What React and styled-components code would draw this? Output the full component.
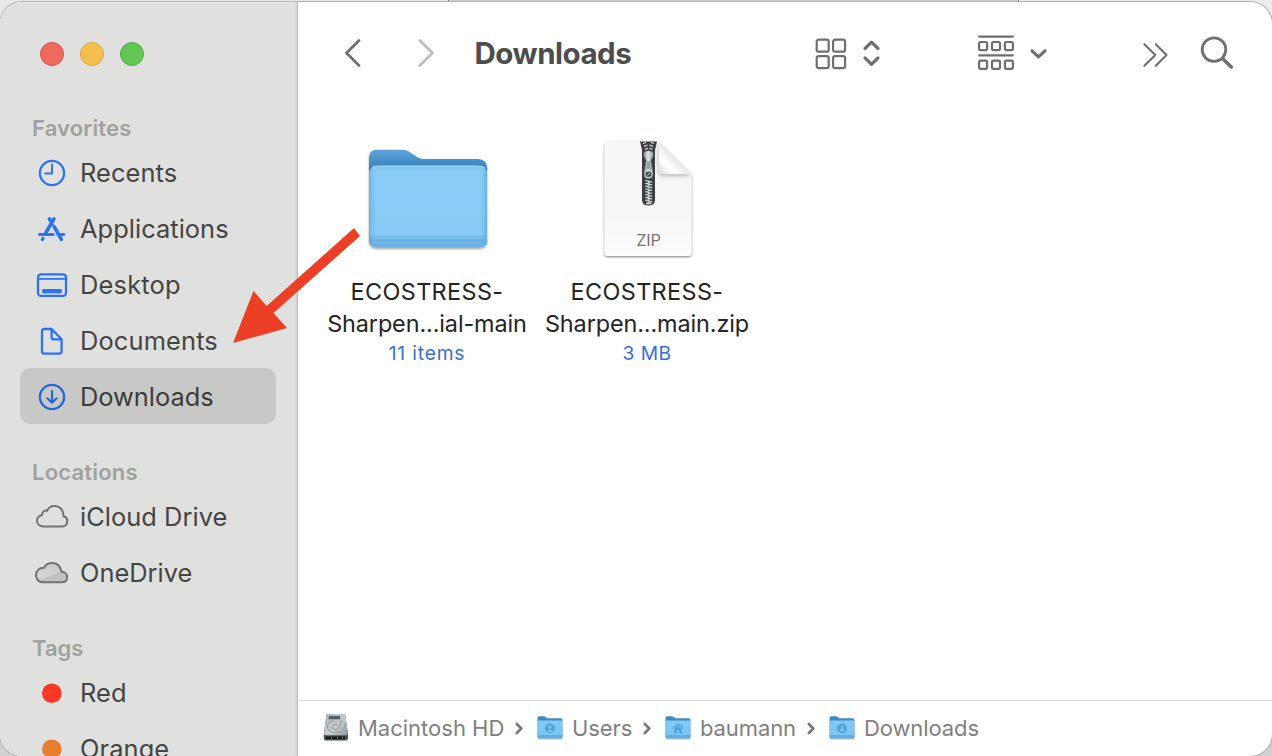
import React from "react";
import styled, { createGlobalStyle } from "styled-components";

const Global = createGlobalStyle`
  *, *::before, *::after { box-sizing: border-box; }
  body { margin: 0; font-family: Inter, "Liberation Sans", sans-serif; }
  svg { display: block; flex: none; overflow: visible; }
`;

const Desktop = styled.div`
  position: relative;
  width: 1272px;
  height: 756px;
  padding-top: 2px;
  overflow: hidden;
  background:
    linear-gradient(#a33a30, #a33a30) 0 736px / 1px 5px no-repeat,
    linear-gradient(90deg, #e8e8e8 0 448px, #777 448px 449px, #cfcfcf 449px 1018px, #777 1018px 1019px, #ececec 1019px) 0 0 / 100% 60px no-repeat,
    #d0d0d0;
`;

const Window = styled.div`
  display: flex;
  height: 754px;
  border-radius: 22px;
  overflow: hidden;
  background: #fff;
  box-shadow: 0 0 0 1px #b0b0b0;
`;

const Sidebar = styled.aside`
  flex: none;
  width: 298px;
  padding: 40px 22px 0 20px;
  background: #e0e0de;
  box-shadow: inset -1px 0 #bdbdbb, inset -3px 0 2px -1px #d0d0ce, inset 0 1px #ededec;
`;

const Lights = styled.div`
  display: flex;
  gap: 16px;
  padding-left: 20px;
`;

const Light = styled.span`
  width: 24px;
  height: 24px;
  border-radius: 50%;
  background: ${(p) => p.$fill};
  border: 1px solid ${(p) => p.$edge};
`;

const Section = styled.section`
  margin-top: ${(p) => p.$gap || 32}px;
`;

const Text = styled.span`
  white-space: nowrap;
  letter-spacing: ${(p) => p.$track || 0}px;
`;

const SectionTitle = styled(Text)`
  display: block;
  height: 32px;
  padding-left: 12px;
  font-size: 22px;
  font-weight: 600;
  line-height: 33px;
  color: #a1a19f;
`;

const Item = styled.div`
  display: flex;
  align-items: center;
  height: 56px;
  border-radius: 10px;
  background: ${(p) => (p.$active ? "#c8c8c6" : "transparent")};
  color: ${(p) => (p.$active ? "#3c3c3b" : "#454544")};
`;

const ItemIcon = styled.span`
  display: flex;
  width: 60px;
  padding-left: 14px;
`;

const ItemLabel = styled(Text)`
  font-size: 25.4px;
  line-height: 32px;
  padding-top: 2px;
`;

const Main = styled.main`
  flex: 1;
  display: flex;
  flex-direction: column;
  min-width: 0;
`;

const Toolbar = styled.header`
  display: flex;
  align-items: center;
  height: 102px;
  padding: 0 37px 0 46px;
  color: #6f6f6f;
`;

const Nav = styled.div`
  display: flex;
  gap: 56px;
`;

const Title = styled(Text)`
  width: 340px;
  margin-left: 38.5px;
  font-size: 29.5px;
  font-weight: 700;
  line-height: 36px;
  color: #4d4d4d;
`;

const Controls = styled.div`
  display: flex;
  align-items: center;
  gap: ${(p) => p.$gap}px;
  margin-right: ${(p) => p.$after || 0}px;
`;

const Files = styled.div`
  flex: 1;
  display: flex;
  padding: 28px 0 0 19px;
`;

const File = styled.figure`
  display: flex;
  flex-direction: column;
  align-items: center;
  width: 220px;
  margin: 0;
`;

const Thumb = styled.div`
  height: 144px;
  padding-left: 2px;
`;

const FileName = styled(Text)`
  font-size: 23.4px;
  line-height: 32px;
  color: #242424;
`;

const Meta = styled(Text)`
  font-size: 19.2px;
  line-height: 26px;
  color: #3570d8;
`;

const PathBar = styled.footer`
  display: flex;
  align-items: center;
  height: 56px;
  padding-left: 25px;
  padding-bottom: 1px;
  border-top: 1px solid #dadada;
  color: #808080;
`;

const Crumb = styled.span`
  display: flex;
  align-items: center;
  gap: 9px;
  width: ${(p) => p.$width}px;
`;

const CrumbText = styled(Text)`
  font-size: 22px;
  line-height: 28px;
`;

const Separator = styled.span`
  display: flex;
  width: 22px;
`;

const Arrow = styled.svg`
  position: absolute;
  left: 233px;
  top: 227px;
`;

const blue = { fill: "none", stroke: "#2d72f3", strokeWidth: 2.3, strokeLinecap: "round", strokeLinejoin: "round" };

const Clock = () => (
  <svg width="36" height="36" {...blue}>
    <circle cx="18" cy="19" r="12.1" />
    <path d="M18 10.5V19.5H11.2" strokeWidth="2" />
  </svg>
);
const Apps = () => (
  <svg width="36" height="36" {...blue} strokeWidth="3.3">
    <path d="M15.4 8.8L17.2 11.9M19.9 8.8L11.8 22.8" strokeWidth="3.6" />
    <path d="M5.5 24.4H19.2M26.5 24.4H29.8" strokeWidth="3" />
    <path d="M20.4 17L27.3 29.3" strokeWidth="3.6" />
    <path d="M19 15L21 19" strokeWidth="2" />
    <path d="M9 28.6L8.4 29.4" />
  </svg>
);
const DesktopIcon = () => (
  <svg width="36" height="36" {...blue}>
    <rect x="4" y="8.3" width="28" height="21.6" rx="3" />
    <path d="M4 12.9H32" strokeWidth="1.8" />
    <rect x="8.2" y="23" width="19.6" height="4.2" rx=".8" fill="#2d72f3" stroke="none" />
  </svg>
);
const DocIcon = () => (
  <svg width="36" height="36" {...blue}>
    <path d="M17.6 7H10.4Q8 7 8 9.5V29.3Q8 31.7 10.4 31.7H25.2Q27.6 31.7 27.6 29.3V17.3ZM17.6 7V15.5Q17.6 17.3 19.4 17.3H27.6" />
  </svg>
);
const DownIcon = () => (
  <svg width="36" height="36" {...blue} stroke="#2366df">
    <circle cx="18" cy="19" r="12.1" />
    <path d="M18 13V24.7M13.4 20.3L18 24.8L22.6 20.3" strokeWidth="2.1" />
  </svg>
);
const ICloud = () => (
  <svg width="36" height="36" fill="none" stroke="#737372" strokeWidth="2">
    <path d="M9.5 28.4H28.2A5.2 5.2 0 0 0 29.5 18.2C29.8 12 25.6 7.9 20.6 7.9C17 7.9 14.4 9.9 13 12.7C10.4 12 8 14 8 17C5 17.8 3 19.8 3 22.8C3 26 5.6 28.4 9.5 28.4Z" />
  </svg>
);
const OneDriveIcon = () => (
  <svg width="36" height="36">
    <path d="M8.4 28.3H27.6C31 28.3 33.1 26.1 33.1 23C33.1 20 30.7 17.8 27.6 17.8C26.4 12.2 22.5 9.1 18 9.1C14.5 9.1 11.8 10.7 10 13.7C5.5 13.5 2 16.6 2 21C2 25.4 5 28.3 8.4 28.3Z" fill="#d3d3d1" />
    <path d="M4 27L20 20L28 18L32 20V25L28 28H8Z" fill="#c0c0be" />
    <path d="M10 14L20 19.5L28 17.8L24 12L18 9Z" fill="#cdcdcb" />
    <path d="M8.4 28.3H27.6C31 28.3 33.1 26.1 33.1 23C33.1 20 30.7 17.8 27.6 17.8C26.4 12.2 22.5 9.1 18 9.1C14.5 9.1 11.8 10.7 10 13.7C5.5 13.5 2 16.6 2 21C2 25.4 5 28.3 8.4 28.3Z" fill="none" stroke="#737372" strokeWidth="2" />
  </svg>
);
const Dot = ({ color }) => (
  <svg width="36" height="36"><circle cx="17.8" cy="19.2" r="9.8" fill={color} /></svg>
);

const FolderSvg = styled.svg`
  margin-top: 16px;
`;

const FolderArt = () => (
  <FolderSvg width="122" height="108" viewBox="0 0 122 108">
    <defs>
      <linearGradient id="back" x1="0" y1="0" x2="0" y2="1">
        <stop offset="0" stopColor="#5fa5d8" /><stop offset=".2" stopColor="#3580c0" /><stop offset="1" stopColor="#3580c0" />
      </linearGradient>
      <linearGradient id="front" x1="0" y1="0" x2="0" y2="1">
        <stop offset="0" stopColor="#81c7f1" /><stop offset=".08" stopColor="#89cdf7" /><stop offset=".84" stopColor="#87cbf6" /><stop offset=".86" stopColor="#75bae7" /><stop offset=".88" stopColor="#7cc2ed" /><stop offset=".91" stopColor="#69afdf" /><stop offset=".94" stopColor="#6fb7e7" /><stop offset="1" stopColor="#68aedf" />
      </linearGradient>
      <linearGradient id="side" x1="0" y1="0" x2="1" y2="0">
        <stop offset="0" stopColor="#4a9bd3" stopOpacity=".5" /><stop offset=".06" stopColor="#69b5e8" stopOpacity="0" /><stop offset=".94" stopColor="#69b5e8" stopOpacity="0" /><stop offset="1" stopColor="#4a9bd3" stopOpacity=".5" />
      </linearGradient>
      <filter id="shade" x="-10%" y="-10%" width="120%" height="125%"><feDropShadow dx="0" dy="1.5" stdDeviation="1.2" floodOpacity=".4" /></filter>
    </defs>
    <g filter="url(#shade)">
      <path d="M2 10Q2 1.7 10 1.7H35Q40 1.7 44 5L50 9Q53 11 57 11H111Q120 11.5 120 20V91Q120 99 112 99H10Q2 99 2 91Z" fill="url(#back)" />
      <rect x="2" y="18" width="118" height="81.5" rx="7.5" fill="url(#front)" />
      <rect x="2" y="18" width="118" height="81.5" rx="7.5" fill="url(#side)" />
    </g>
    <path d="M5 19.5Q7 18 11 18H111Q116 18 118 20" fill="none" stroke="#a8dcfa" strokeWidth="1" />
  </FolderSvg>
);

const teeth = Array.from({ length: 8 }, (_, i) => 40.5 + i * 2.8);

const ZipSvg = styled.svg`
  margin-top: 8px;
`;

const ZipText = styled.text`
  font-family: Inter, sans-serif;
  font-size: 16.3px;
  letter-spacing: -0.2px;
  fill: #777;
`;

const ZipArt = () => (
  <ZipSvg width="90" height="120" viewBox="0 0 90 120">
    <defs>
      <linearGradient id="paper" x1="0" y1="0" x2="0" y2="1"><stop stopColor="#f8f8f8" /><stop offset=".6" stopColor="#f6f6f6" /><stop offset="1" stopColor="#fcfcfc" /></linearGradient>
      <linearGradient id="fold" x1="0" y1="1" x2="1" y2="0"><stop stopColor="#d9d9d9" /><stop offset=".25" stopColor="#fff" /><stop offset=".5" stopColor="#e9e9e9" /></linearGradient>
      <linearGradient id="metal"><stop stopColor="#8b9498" /><stop offset=".45" stopColor="#e2e8ea" /><stop offset="1" stopColor="#91999d" /></linearGradient>
      <filter id="paperShade" x="-10%" y="-10%" width="120%" height="120%"><feDropShadow dx="0" dy="1" stdDeviation="1.1" floodOpacity=".5" /></filter>
      <filter id="foldShade" x="-20%" y="-20%" width="150%" height="150%"><feDropShadow dx="-.5" dy="2" stdDeviation="2" floodOpacity=".25" /></filter>
      <clipPath id="sheet"><path d="M5 1.5H56L88.5 34V113Q88.5 116 85 116H5Q1.5 116 1.5 113V5Q1.5 1.5 5 1.5Z" /></clipPath>
    </defs>
    <path d="M5 1.5H56L88.5 34V113Q88.5 116 85 116H5Q1.5 116 1.5 113V5Q1.5 1.5 5 1.5Z" fill="url(#paper)" filter="url(#paperShade)" />
    <g clipPath="url(#sheet)">
      <path d="M56 1.5V30Q56 34 60 34H88.5Z" fill="url(#fold)" filter="url(#foldShade)" />
    </g>
    <path d="M37 1.5H54L52 10V60Q52 65.5 45.5 65.5Q39 65.5 39 60V10Z" fill="#3a3e40" />
    <path d="M40 3.5L43 2.5M51 3.5L48 2.5M41 6.5L44.5 5M50 6.5L46.5 5M42 9.5L45 8M49.5 9.5L46.5 8" stroke="#dce0e1" strokeWidth="1.3" />
    {teeth.map((y) => <path key={y} d={`M42.2 ${y}L46.6 ${y + 0.6}M44.6 ${y + 1.9}L49.2 ${y + 1.3}`} stroke="#d4d9da" strokeWidth="1.2" />)}
    <path d="M43 63.4H48.5" stroke="#d4d9da" strokeWidth="1.6" />
    <path d="M41.5 12Q45.5 9.5 49.5 12Q51.5 15 49 18L47.8 20.5L50 33Q50.6 38.5 45.5 38.5Q40.3 38.5 41 33L43.2 20.5L42 18Q39.6 15 41.5 12Z" fill="url(#metal)" stroke="#7a8387" strokeWidth=".5" />
    <circle cx="45.5" cy="34.3" r="2.7" fill="#40474a" /><path d="M44 35.5L47 33" stroke="#c7cfd1" />
    <path d="M44 21L43 29H48L47 21Z" fill="#96a2a7" />
    <ZipText x="45.5" y="105.5" textAnchor="middle">ZIP</ZipText>
  </ZipSvg>
);

const DiskIcon = () => (
  <svg width="26" height="28">
    <defs><linearGradient id="disk" x1="0" y1="0" x2="1" y2="1"><stop stopColor="#aeb6bb" /><stop offset=".6" stopColor="#c5cbcf" /><stop offset="1" stopColor="#8d9499" /></linearGradient></defs>
    <path d="M3.5 1Q4 0 5.5 0H20Q21.8 0 22.3 1.5L25 20V24Q25 26.5 22.5 26.5H3Q.8 26.5.8 24V20Z" fill="#4d5052" />
    <path d="M3.3 1.5Q3.5 0 5.5 0H20Q21.8 0 22.3 1.5L25 19.5Q25 21.3 23 21.3H3Q.8 21.3.8 19.5Z" fill="url(#disk)" />
    <path d="M6 1.9H17L17.3 5.2H5.5Z" fill="#596065" />
    <path d="M18.5 7Q23 9 21.3 14Q19 18.5 12 18.5Q4 18 4.5 12Q5.5 7.2 11 7" fill="none" stroke="#929ba1" strokeWidth="1" />
    <path d="M18 6.5Q18.5 10 16 13Q14 16.5 11 15.5Q8.5 13.5 10 11.5Q12 9.5 14.5 11" fill="none" stroke="#899298" strokeWidth="1" />
    <path d="M3 23.8H22" stroke="#171819" strokeWidth="2.6" /><path d="M8 23.8H9M14 23.8H15M19 23.8H20" stroke="#85898b" strokeWidth="1.6" />
  </svg>
);

const SmallFolder = ({ kind }) => (
  <svg width="26" height="24">
    <defs><linearGradient id="mini" x1="0" y1="0" x2="0" y2="1"><stop stopColor="#83c9f5" /><stop offset=".78" stopColor="#7cc6f4" /><stop offset=".84" stopColor="#5da9da" /><stop offset="1" stopColor="#68b1e0" /></linearGradient></defs>
    <path d="M.8 22.7H25" stroke="#8c9298" strokeWidth="1.5" opacity=".6" />
    <path d="M.5 2Q.5.2 2.3.2H7.5L10.5 2.2H23.5Q25.4 2.2 25.4 4V21H.5Z" fill="#4289c1" />
    <rect x=".5" y="4.5" width="25" height="18" rx="1.5" fill="url(#mini)" />
    {kind === "user" && <><circle cx="13" cy="12.4" r="4.9" fill="#4fa3da" /><circle cx="13" cy="11" r="1.8" fill="#7fc1ea" /><path d="M9.8 15.2Q13 12 16.2 15.2Q13 17.6 9.8 15.2Z" fill="#7fc1ea" /></>}
    {kind === "home" && <><path d="M7.6 12.6L13 8L18.4 12.6M16.6 8.2V10.5" fill="none" stroke="#4fa3da" strokeWidth="1.2" /><path d="M9.3 12.8L13 9.8L16.7 12.8V17.4H14.3V14.2H11.7V17.4H9.3Z" fill="#4fa3da" /></>}
    {kind === "down" && <><circle cx="13" cy="12.4" r="4.9" fill="#4fa3da" /><path d="M13 9.6V15M10.8 13L13 15.1L15.2 13" fill="none" stroke="#8acaf0" strokeWidth="1.2" /></>}
  </svg>
);

const line = { fill: "none", stroke: "currentColor", strokeLinecap: "round", strokeLinejoin: "round" };

const GroupSquares = ({ y }) => [1.1, 14, 26.9].map((x) => (
  <rect key={x} x={x} y={y} width="8" height="8.2" rx="1.6" />
));

const Next = () => (
  <Separator>
    <svg width="9" height="12" {...line} stroke="#777" strokeWidth="2.6"><path d="M1.8 2L6.3 6.5L1.8 11" /></svg>
  </Separator>
);

const favorites = [
  ["Recents", Clock, 0.1], ["Applications", Apps, 0.05], ["Desktop", DesktopIcon, 0.2],
  ["Documents", DocIcon, 0.15], ["Downloads", DownIcon, 0],
];

export default function App() {
  return (
    <>
      <Global />
      <Desktop>
        <Window>
          <Sidebar>
            <Lights>
              <Light $fill="#ee6a5f" $edge="#d9544b" />
              <Light $fill="#f5bf50" $edge="#dba63f" />
              <Light $fill="#62c655" $edge="#4fae43" />
            </Lights>
            <Section $gap={46}>
              <SectionTitle $track={0.15}>Favorites</SectionTitle>
              {favorites.map(([label, Icon, track]) => (
                <Item key={label} $active={label === "Downloads"}>
                  <ItemIcon><Icon /></ItemIcon>
                  <ItemLabel $track={track}>{label}</ItemLabel>
                </Item>
              ))}
            </Section>
            <Section>
              <SectionTitle $track={0.2}>Locations</SectionTitle>
              <Item><ItemIcon><ICloud /></ItemIcon><ItemLabel $track={0.05}>iCloud Drive</ItemLabel></Item>
              <Item><ItemIcon><OneDriveIcon /></ItemIcon><ItemLabel>OneDrive</ItemLabel></Item>
            </Section>
            <Section>
              <SectionTitle>Tags</SectionTitle>
              <Item><ItemIcon><Dot color="#fa3828" /></ItemIcon><ItemLabel $track={0.1}>Red</ItemLabel></Item>
              <Item><ItemIcon><Dot color="#e87e30" /></ItemIcon><ItemLabel $track={0.1}>Orange</ItemLabel></Item>
            </Section>
          </Sidebar>
          <Main>
            <Toolbar>
              <Nav>
                <svg width="18" height="30" {...line} strokeWidth="2.8"><path d="M15 2.6L2.5 15L15 27.4" /></svg>
                <svg width="18" height="30" {...line} stroke="#bdbdbd" strokeWidth="2.8"><path d="M1.8 2.6L14.5 15L1.8 27.4" /></svg>
              </Nav>
              <Title $track={-0.48}>Downloads</Title>
              <Controls $gap={17} $after={98}>
                <svg width="31" height="31" {...line} strokeWidth="2.2">
                  {[1.7, 18.1].map((y) => [1.7, 18.1].map((x) => <rect key={`${x}-${y}`} x={x} y={y} width="12" height="12" rx="2" />))}
                </svg>
                <svg width="17" height="28" {...line} strokeWidth="3.2"><path d="M2 9.5L8.5 3.1L15 9.5M2 18.9L8.5 25.3L15 18.9" /></svg>
              </Controls>
              <Controls $gap={16} $after={96}>
                <svg width="36" height="36" {...line} strokeWidth="2.2">
                  <path d="M1.2 1.7H34.8M1.2 20.4H34.8" />
                  <GroupSquares y={7} />
                  <GroupSquares y={25.7} />
                </svg>
                <svg width="17" height="12" {...line} strokeWidth="3.2"><path d="M2 3.8L8.5 9.9L15 3.8" /></svg>
              </Controls>
              <Controls $gap={33}>
                <svg width="25" height="26" {...line} strokeWidth="2.1"><path d="M1.4 4.2L12.3 15L1.4 25.8M12.8 4.2L23.5 15L12.8 25.8" /></svg>
                <svg width="34" height="36" {...line} strokeWidth="2.8"><circle cx="13" cy="14.6" r="11.8" /><path d="M22 24L30.3 32" strokeWidth="3.6" /></svg>
              </Controls>
            </Toolbar>
            <Files>
              <File>
                <Thumb><FolderArt /></Thumb>
                <FileName $track={0.38}>ECOSTRESS-</FileName>
                <FileName $track={-0.1}>Sharpen...ial-main</FileName>
                <Meta $track={0.85}>11 items</Meta>
              </File>
              <File>
                <Thumb><ZipArt /></Thumb>
                <FileName $track={0.38}>ECOSTRESS-</FileName>
                <FileName $track={-0.1}>Sharpen...main.zip</FileName>
                <Meta $track={0.5}>3 MB</Meta>
              </File>
            </Files>
            <PathBar>
              <Crumb $width={192}><DiskIcon /><CrumbText>Macintosh HD</CrumbText></Crumb><Next />
              <Crumb $width={106}><SmallFolder kind="user" /><CrumbText $track={-0.1}>Users</CrumbText></Crumb><Next />
              <Crumb $width={142}><SmallFolder kind="home" /><CrumbText $track={-0.1}>baumann</CrumbText></Crumb><Next />
              <Crumb $width={160}><SmallFolder kind="down" /><CrumbText $track={-0.1}>Downloads</CrumbText></Crumb>
            </PathBar>
          </Main>
        </Window>
        <Arrow width="128" height="117"><path d="M0 116L20.5 64L33.7 79L121 1L127 9L40.5 86L54 101Z" fill="#eb4026" /></Arrow>
      </Desktop>
    </>
  );
}
